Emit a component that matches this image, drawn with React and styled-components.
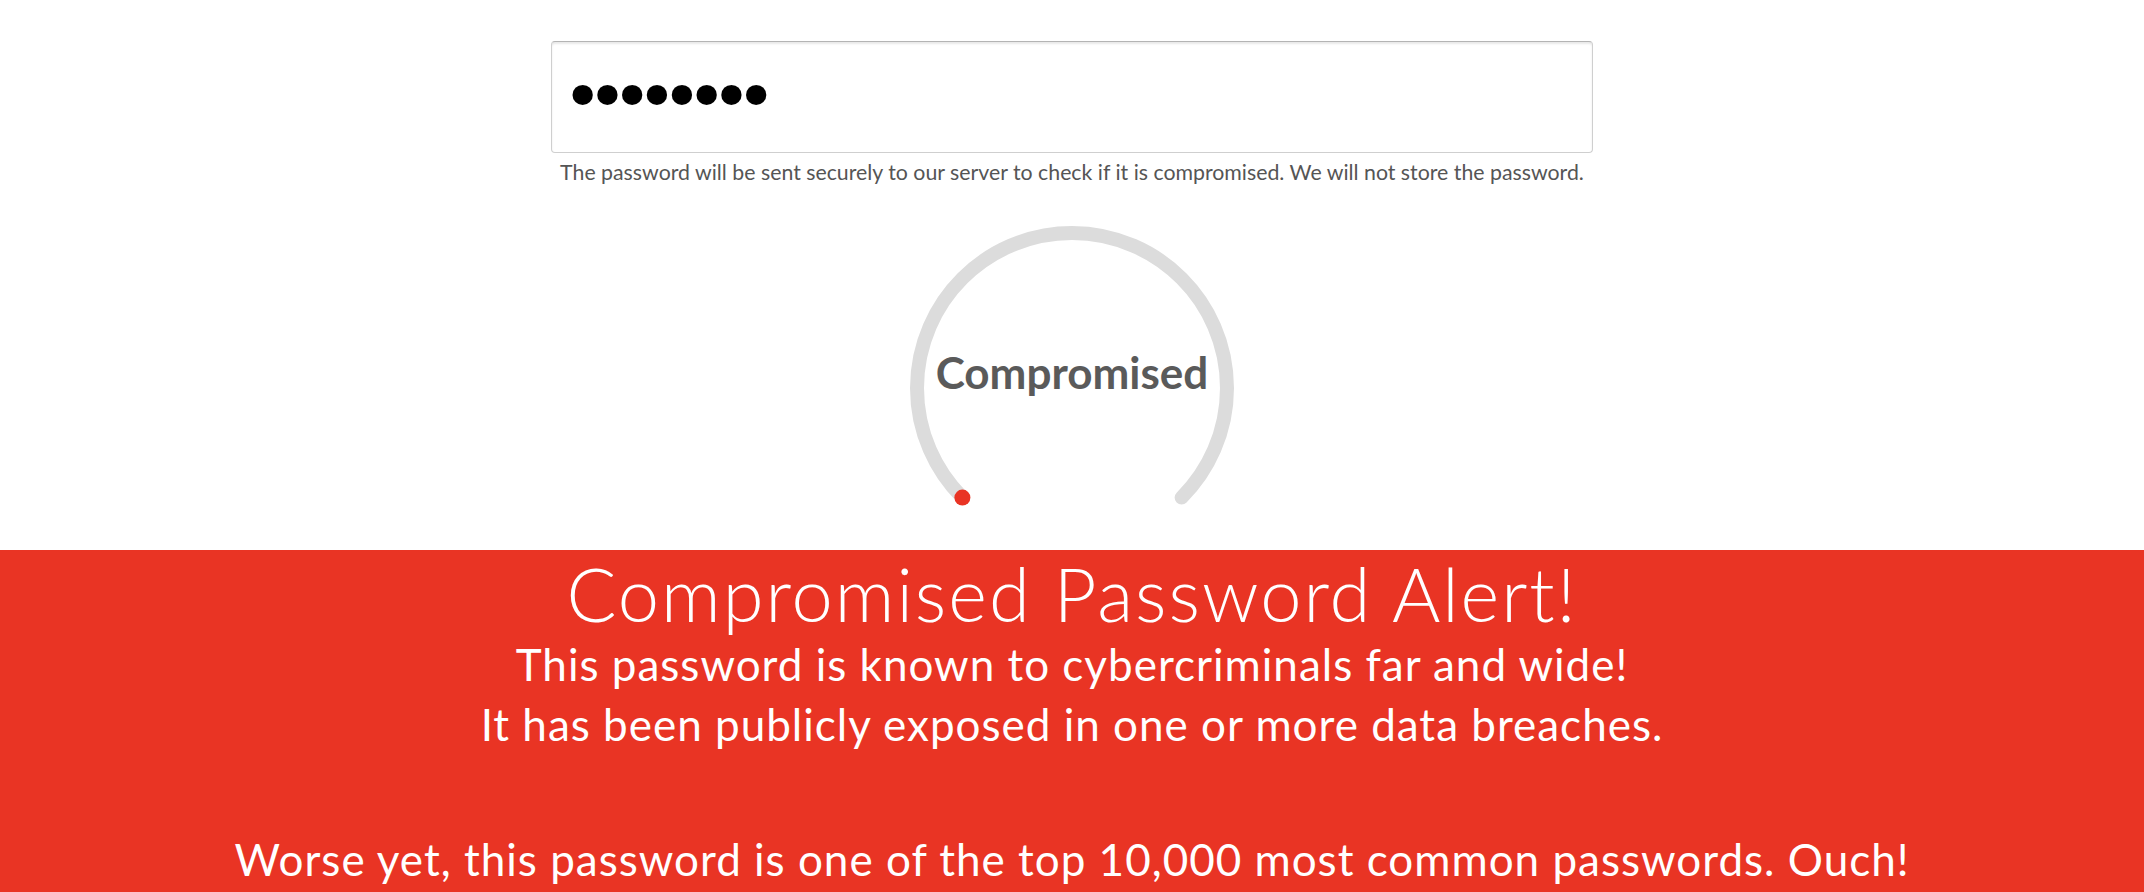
import React from 'react';
import styled, { createGlobalStyle } from 'styled-components';

const GlobalStyle = createGlobalStyle`
  html, body {
    margin: 0;
    padding: 0;
    background: #fff;
  }
  body {
    font-family: Lato, "Liberation Sans", sans-serif;
  }
`;

const Page = styled.div`
  display: flex;
  flex-direction: column;
  align-items: center;
  min-height: 892px;
`;

const Checker = styled.section`
  display: flex;
  flex-direction: column;
  align-items: center;
  padding-top: 41px;
  width: 1042px;
`;

const PasswordInput = styled.input`
  box-sizing: border-box;
  width: 100%;
  height: 112px;
  padding: 0 10px;
  border: 1px solid #cfcfcf;
  border-top-color: #b4b4b4;
  border-radius: 4px;
  box-shadow: inset 0 2px 2px rgba(0, 0, 0, 0.09);
  font-family: "DejaVu Sans", sans-serif;
  font-size: 70px;
  letter-spacing: -16.5px;
  color: #000;
  caret-color: #000;
  outline: none;
`;

const Note = styled.p`
  margin: 6px 0 0;
  font-size: 21.3px;
  color: #555;
  text-align: center;
  white-space: nowrap;
`;

const Gauge = styled.div`
  position: relative;
  width: 340px;
  height: 290px;
  margin-top: 33px;
`;

const GaugeLabel = styled.div`
  position: absolute;
  left: 0;
  right: 0;
  top: 132px;
  text-align: center;
  font-size: 44px;
  font-weight: 700;
  color: #5a5a5a;
  line-height: 1;
`;

const Alert = styled.section`
  align-self: stretch;
  margin-top: 42px;
  background: #e93424;
  color: #fff;
  text-align: center;
  padding: 4px 0 60px;
  font-family: Lato, "Liberation Sans", sans-serif;
`;

const AlertTitle = styled.h1`
  margin: 0;
  font-size: 74px;
  font-weight: 300;
  letter-spacing: 2px;
  line-height: 80px;
`;

const AlertText = styled.p`
  margin: ${(p) => p.$gap || 0}px 0 0;
  font-size: 44px;
  font-weight: 400;
  letter-spacing: 1px;
  line-height: 60px;
`;

const R = 155;
const C = 170;
const arcPoint = (deg) => {
  const a = (deg * Math.PI) / 180;
  return [C + R * Math.cos(a), C + R * Math.sin(a)];
};

const GaugeArc = () => {
  const [sx, sy] = arcPoint(135);
  const [ex, ey] = arcPoint(45);
  return (
    <svg width="340" height="290" viewBox="0 0 340 290">
      <path
        d={`M ${sx} ${sy} A ${R} ${R} 0 1 1 ${ex} ${ey}`}
        fill="none"
        stroke="#dcdcdc"
        strokeWidth="14"
        strokeLinecap="round"
      />
      <circle cx={sx} cy={sy} r="8" fill="#e93424" />
    </svg>
  );
};

export default function App() {
  return (
    <Page>
      <GlobalStyle />
      <Checker>
        <PasswordInput type="password" defaultValue="password" autoFocus />
        <Note>
          The password will be sent securely to our server to check if it is compromised. We will
          not store the password.
        </Note>
        <Gauge>
          <GaugeArc />
          <GaugeLabel>Compromised</GaugeLabel>
        </Gauge>
      </Checker>
      <Alert>
        <AlertTitle>Compromised Password Alert!</AlertTitle>
        <AlertText>
          This password is known to cybercriminals far and wide!
          <br />
          It has been publicly exposed in one or more data breaches.
        </AlertText>
        <AlertText $gap={75}>
          Worse yet, this password is one of the top 10,000 most common passwords. Ouch!
        </AlertText>
      </Alert>
    </Page>
  );
}
